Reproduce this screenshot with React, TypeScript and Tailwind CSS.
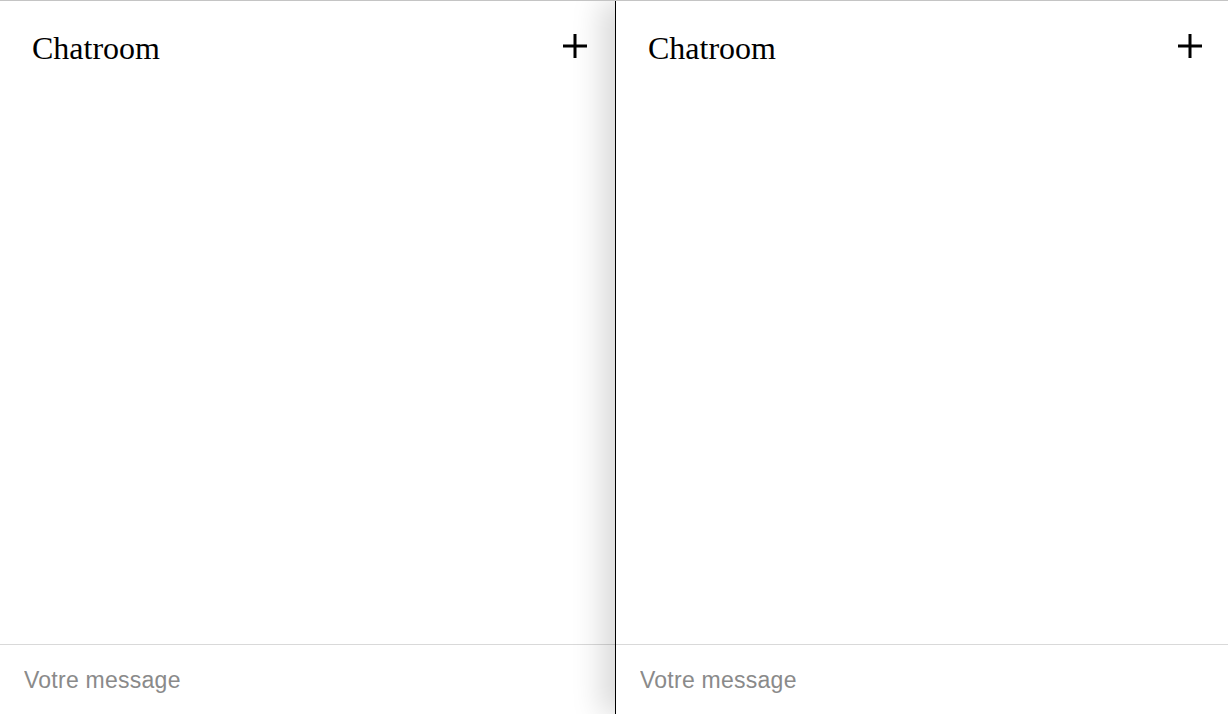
import React from "react";

function PlusIcon() {
  return (
    <svg width="26" height="26" viewBox="0 0 26 26" className="block">
      <path d="M13 1v24M1 13h24" stroke="#000" strokeWidth="3" fill="none" />
    </svg>
  );
}

function Chatroom({ headerClass }: { headerClass: string }) {
  return (
    <div className="flex h-full flex-col bg-white">
      {/* Header */}
      <div className={"flex items-start justify-between pl-8 " + headerClass}>
        <h1 className="mt-[29px] text-[32px] leading-[37px] text-black [font-family:'Liberation_Serif','Times_New_Roman',serif]">
          Chatroom
        </h1>
        <button className="mt-[32px]">
          <PlusIcon />
        </button>
      </div>

      {/* Messages */}
      <div className="flex-1" />

      {/* Input */}
      <div className="h-[70px] border-t border-[#d9d9d9]">
        <input
          placeholder="Votre message"
          className="h-full w-full bg-transparent px-6 pt-[2px] text-[23px] tracking-[0.25px] text-black outline-none placeholder:text-[#8a8a8a] [font-family:'Liberation_Sans',Arial,sans-serif]"
        />
      </div>
    </div>
  );
}

export default function App() {
  return (
    <div className="flex h-[714px] w-full overflow-hidden border-t border-[#c4c4c4] bg-white">
      <div className="w-[615px] shrink-0">
        <Chatroom headerClass="pr-[27px]" />
      </div>
      <div className="relative flex-1 border-l border-black shadow-[-14px_0_28px_rgba(0,0,0,0.15)]">
        <Chatroom headerClass="pr-[25px]" />
      </div>
    </div>
  );
}
